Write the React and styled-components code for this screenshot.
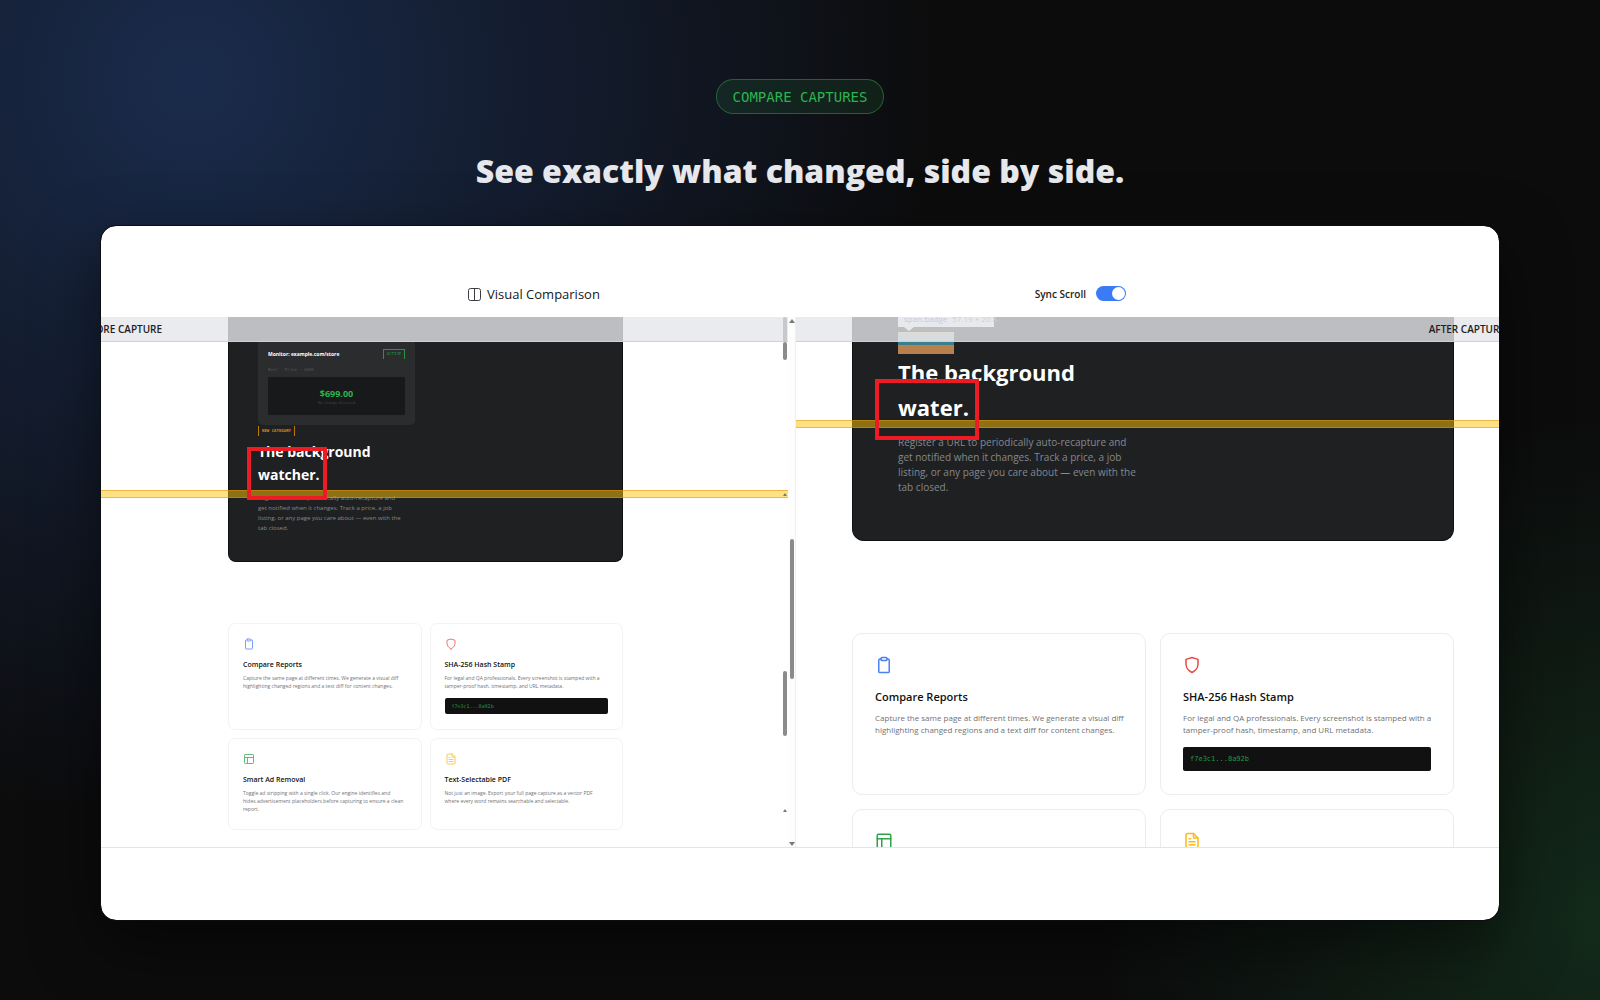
import React from "react";
import styled, { createGlobalStyle, css } from "styled-components";

const sans = `"Open Sans", "Noto Sans", sans-serif`;
const mono = `"DejaVu Sans Mono", "Liberation Mono", monospace`;

const GlobalStyle = createGlobalStyle`
  *, *::before, *::after { box-sizing: border-box; }
  html, body, #root { min-height: 100vh; }
  body { margin: 0; background: #0b0b0c; font-family: ${sans}; }
  h1, h2, h3, p, figure { margin: 0; }
`;

const Stage = styled.main`
  min-height: 100vh;
  display: flex;
  flex-direction: column;
  align-items: center;
  padding: 79px 100px 79px;
  overflow: hidden;
  background:
    radial-gradient(circle at 12% 8%, rgba(32, 56, 102, 0.7), transparent 44%),
    radial-gradient(circle at 100% 92%, rgba(24, 66, 36, 0.55), transparent 27%),
    #0c0c0d;
`;

const Pill = styled.span`
  display: flex;
  align-items: center;
  height: 35px;
  padding: 0 16px;
  border: 1px solid rgba(48, 176, 80, 0.45);
  border-radius: 18px;
  background: rgba(40, 150, 70, 0.14);
  color: #2db34e;
  font: 14px ${mono};
`;

const Title = styled.h1`
  margin: 33px 0 30px;
  color: #e6e8ec;
  font-size: 32px;
  font-weight: 800;
  line-height: 48px;
`;

const Frame = styled.section`
  width: 100%;
  flex: 1;
  display: flex;
  flex-direction: column;
  padding: 60px 0 72px;
  border: 1px solid #0c0d10;
  border-radius: 16px;
  background: #fff;
  background-clip: padding-box;
  box-shadow: 0 24px 64px rgba(0, 0, 0, 0.5);
  overflow: hidden;
`;

const Toolbar = styled.header`
  height: 31px;
  display: flex;
  align-items: flex-start;
  padding: 0 373px 0 367px;
  justify-content: space-between;
`;

const ToolTitle = styled.h2`
  display: flex;
  align-items: center;
  gap: 6px;
  height: 16px;
  color: #17181a;
  font-size: 13px;
  font-weight: 500;
`;

const SyncLabel = styled.label`
  display: flex;
  align-items: center;
  gap: 10px;
  height: 15px;
  color: #222;
  font-size: 10px;
  font-weight: 600;
`;

const Toggle = styled.input`
  appearance: none;
  width: 30px;
  height: 15px;
  margin: 0;
  padding: 1px;
  border-radius: 8px;
  background: #3b7cf6;
  display: flex;
  justify-content: flex-end;
  &::before {
    content: "";
    width: 13px;
    height: 13px;
    border-radius: 50%;
    background: #fff;
  }
`;

const Viewer = styled.div`
  flex: 1;
  min-height: 0;
  display: grid;
  grid-template-columns: 687fr 8px 703fr;
  border-bottom: 1px solid #e3e4e6;
`;

const Pane = styled.section`
  position: relative;
  min-width: 0;
  height: 530px;
  overflow: hidden;
`;

const LabelBar = styled.div`
  position: absolute;
  inset: 0 0 auto 0;
  height: 25px;
  display: flex;
  align-items: center;
  justify-content: ${(p) => (p.$end ? "flex-end" : "flex-start")};
  border-bottom: 1px solid #cfd1d4;
  background: rgba(228, 230, 234, 0.8);
  color: #1f2022;
  font-size: 10px;
  font-weight: 600;
  white-space: nowrap;
  span { margin: ${(p) => (p.$end ? "0 -6px 0 0" : "0 0 0 -23px")}; }
`;

const Band = styled.div`
  position: absolute;
  left: 0;
  right: 0;
  top: ${(p) => p.$top}px;
  height: 8px;
  border: solid rgba(224, 142, 20, 0.5);
  border-width: 1px 0;
  background: rgba(255, 193, 7, 0.5);
`;

const Marker = styled.div`
  position: absolute;
  border: 4px solid #ed1c24;
`;
const MarkerBefore = styled(Marker)`
  left: 146px;
  top: 130px;
  width: 80px;
  height: 53px;
`;
const MarkerAfter = styled(Marker)`
  left: 79px;
  top: 62px;
  width: 104px;
  height: 61px;
`;

const small = css`
  --pad: 127px;
  --hero-pad: 29px;
  --hero-radius: 8px;
  --h-size: 14px;
  --h-line: 23px;
  --h-gap: 7px;
  --p-size: 6px;
  --p-line: 10px;
  --p-width: 160px;
  --grid-gap: 8px;
  --card-pad: 14px;
  --card-radius: 7px;
  --card-line: #f3f3f5;
  --icon: 12px;
  --icon-fade: 0.75;
  --icon-gap: 9px;
  --t-size: 7px;
  --t-line: 12px;
  --c-gap: 3px;
  --c-size: 5px;
  --c-line: 8px;
  --code-gap: 8px;
  --code-height: 16px;
  --code-size: 5px;
`;
const large = css`
  --pad: 56px;
  --hero-pad: 45px;
  --hero-radius: 12px;
  --h-size: 22px;
  --h-line: 35px;
  --h-gap: 10px;
  --p-size: 10px;
  --p-line: 15px;
  --p-width: 240px;
  --grid-gap: 14px;
  --card-pad: 22px;
  --card-radius: 10px;
  --card-line: #ececee;
  --icon: 18px;
  --icon-fade: 1;
  --icon-gap: 14px;
  --t-size: 11px;
  --t-line: 18px;
  --c-gap: 6px;
  --c-size: 8px;
  --c-line: 12px;
  --code-gap: 11px;
  --code-height: 24px;
  --code-size: 7px;
`;

const Capture = styled.article`
  ${(p) => (p.$large ? large : small)}
  padding: 0 ${(p) => (p.$large ? 45 : 165)}px 0 var(--pad);
`;

const Hero = styled.section`
  height: ${(p) => p.$height}px;
  padding: ${(p) => p.$top}px var(--hero-pad) 0;
  border: 1px solid #0f1011;
  border-top: 0;
  border-radius: 0 0 var(--hero-radius) var(--hero-radius);
  background: #1f2022;
`;

const HeroTitle = styled.h2`
  color: #fff;
  font-size: var(--h-size);
  line-height: var(--h-line);
  font-weight: 700;
`;

const HeroText = styled.p`
  width: var(--p-width);
  margin-top: var(--h-gap);
  color: #85888d;
  font-size: var(--p-size);
  line-height: var(--p-line);
  white-space: nowrap;
`;

const Monitor = styled.div`
  width: 157px;
  height: 83px;
  padding: 6px 10px 10px;
  border-radius: 0 0 5px 5px;
  background: #2b2c2e;
`;
const MonitorHead = styled.div`
  display: flex;
  align-items: center;
  justify-content: space-between;
  height: 11px;
  color: #fff;
  font-size: 5px;
  font-weight: 700;
`;
const Active = styled.span`
  width: 22px;
  height: 10px;
  border: 1px solid #24963f;
  border-bottom: 0;
  color: #24963f;
  font: 4px/8px ${mono};
  text-align: center;
`;
const MonitorMeta = styled.div`
  margin: 6px 0 3px;
  color: #55575a;
  font: 4px/9px ${mono};
`;
const PriceBox = styled.div`
  height: 38px;
  display: flex;
  flex-direction: column;
  align-items: center;
  padding-top: 11px;
  background: #18191b;
  color: #2db34e;
  font-size: 9px;
  line-height: 12px;
  font-weight: 700;
  small { color: #44464a; font-size: 4px; line-height: 6px; font-weight: 400; }
`;
const Category = styled.span`
  display: block;
  width: 37px;
  height: 10px;
  margin: 1px 0 4px;
  border: solid #b97a0c;
  border-width: 0 1px;
  color: #d9900f;
  font: 700 4px/9px ${mono};
  text-align: center;
`;

const Inspector = styled.div`
  position: relative;
  width: 96px;
  height: 10px;
  padding-left: 6px;
  background: #f4f5f7;
  color: #6d7078;
  font-size: 8px;
  line-height: 4px;
  white-space: nowrap;
  b { color: #4c4cc8; font-weight: 400; margin-right: 5px; }
  &::after {
    content: "";
    position: absolute;
    left: 6px;
    top: 10px;
    border: solid transparent;
    border-width: 4px 5px 0;
    border-top-color: #f4f5f7;
  }
`;
const Inspected = styled.div`
  width: 56px;
  height: 22px;
  margin: 5px 0 1px;
  background: linear-gradient(#c9b860 0 1px, #a9b4bb 1px 10px, #3a7f8c 10px 13px, #9a8f55 13px 14px, #b9804e 14px);
`;

const Grid = styled.div`
  display: grid;
  grid-template-columns: 1fr 1fr;
  grid-auto-rows: auto;
  gap: var(--grid-gap);
  padding-top: ${(p) => p.$top}px;
`;
const Card = styled.section`
  min-width: 0;
  height: ${(p) => p.$height}px;
  padding: var(--card-pad);
  border: 1px solid var(--card-line);
  border-radius: var(--card-radius);
  svg { display: block; width: var(--icon); height: var(--icon); opacity: var(--icon-fade); }
`;
const CardTitle = styled.h3`
  margin-top: var(--icon-gap);
  color: #111;
  font-size: var(--t-size);
  line-height: var(--t-line);
  font-weight: 600;
`;
const CardText = styled.p`
  margin-top: var(--c-gap);
  color: #707276;
  font-size: var(--c-size);
  line-height: var(--c-line);
  white-space: nowrap;
`;
const Hash = styled.code`
  display: block;
  height: var(--code-height);
  margin-top: var(--code-gap);
  padding-left: 7px;
  border-radius: 2px;
  background: #111;
  color: #239a42;
  font: var(--code-size) / var(--code-height) ${mono};
`;

const Rail = styled.div`
  position: relative;
  background: #fdfdfd;
  border-right: 1px solid #efeff1;
`;
const Thumb = styled.i`
  position: absolute;
  ${(p) => (p.$inner ? "right: 1px" : "left: 2px")};
  top: ${(p) => p.$top}px;
  width: 4px;
  height: ${(p) => p.$height}px;
  border-radius: 2px;
  background: ${(p) => p.$color || "#8b8b8b"};
`;
const Arrow = styled.i`
  position: absolute;
  ${(p) => (p.$inner ? "right: 1px" : "left: 1px")};
  top: ${(p) => p.$top}px;
  border: solid transparent;
  border-width: ${(p) => (p.$down ? "4px 3px 0" : p.$inner ? "0 2px 3px" : "0 3px 4px")};
  border-${(p) => (p.$down ? "top" : "bottom")}-color: #77797c;
`;

const Svg = (p) => (
  <svg viewBox="0 0 24 24" fill="none" strokeWidth="2" strokeLinejoin="round" strokeLinecap="round" aria-hidden="true" {...p} />
);
const icons = {
  clipboard: (
    <Svg stroke="#4a80f0">
      <path d="M16 4h1.500a1.500 1.500 0 0 1 1.500 1.500v15a1.500 1.500 0 0 1-1.500 1.500h-11A1.500 1.500 0 0 1 5 20.500v-15A1.500 1.500 0 0 1 6.500 4H8" />
      <rect x="8" y="2" width="8" height="4" rx="1.500" />
    </Svg>
  ),
  shield: (
    <Svg stroke="#e9493f">
      <path d="M12 22s8-4 8-11V4.500l-8-2.500-8 2.500V11c0 7 8 11 8 11z" />
    </Svg>
  ),
  layout: (
    <Svg stroke="#2fa34c">
      <rect x="3" y="3" width="18" height="18" rx="1.500" />
      <path d="M3 9h18M9 9v12" />
    </Svg>
  ),
  file: (
    <Svg stroke="#f8bb1e">
      <path d="M14 2H6a2 2 0 0 0-2 2v16a2 2 0 0 0 2 2h12a2 2 0 0 0 2-2V8z" />
      <path d="M14 2v6h6M16 13H8M16 17H8M10 9H8" />
    </Svg>
  ),
};

const features = [
  { icon: "clipboard", title: "Compare Reports", lines: ["Capture the same page at different times. We generate a visual diff", "highlighting changed regions and a text diff for content changes."] },
  { icon: "shield", title: "SHA-256 Hash Stamp", lines: ["For legal and QA professionals. Every screenshot is stamped with a", "tamper-proof hash, timestamp, and URL metadata."], hash: "f7e3c1...8a92b" },
  { icon: "layout", title: "Smart Ad Removal", lines: ["Toggle ad stripping with a single click. Our engine identifies and", "hides advertisement placeholders before capturing to ensure a clean", "report."] },
  { icon: "file", title: "Text-Selectable PDF", lines: ["Not just an image. Export your full page capture as a vector PDF", "where every word remains searchable and selectable."] },
];

const Lines = ({ of }) => of.map((l, i) => <React.Fragment key={l}>{i > 0 && <br />}{l}</React.Fragment>);

const Features = ({ top, heights }) => (
  <Grid $top={top}>
    {features.map((f, i) => (
      <Card key={f.title} $height={heights[i >> 1]}>
        {icons[f.icon]}
        <CardTitle>{f.title}</CardTitle>
        <CardText><Lines of={f.lines} /></CardText>
        {f.hash && <Hash>{f.hash}</Hash>}
      </Card>
    ))}
  </Grid>
);

const HeroCopy = ({ word }) => (
  <>
    <HeroTitle>The background<br />{word}</HeroTitle>
    <HeroText>
      <Lines of={["Register a URL to periodically auto-recapture and", "get notified when it changes. Track a price, a job", "listing, or any page you care about — even with the", "tab closed."]} />
    </HeroText>
  </>
);

export default function App() {
  return (
    <>
      <GlobalStyle />
      <Stage>
        <Pill>COMPARE CAPTURES</Pill>
        <Title>See exactly what changed, side by side.</Title>
        <Frame>
          <Toolbar>
            <ToolTitle>
              <svg width="13" height="13" viewBox="0 0 13 13" fill="none" stroke="#3a3c40" aria-hidden="true">
                <rect x="0.500" y="0.500" width="12" height="12" rx="2" />
                <path d="M6.500 0.500v12" />
              </svg>
              Visual Comparison
            </ToolTitle>
            <SyncLabel>
              Sync Scroll
              <Toggle type="checkbox" role="switch" defaultChecked />
            </SyncLabel>
          </Toolbar>
          <Viewer>
            <Pane>
              <Capture>
                <Hero $height={245} $top={25}>
                  <Monitor>
                    <MonitorHead>Monitor: example.com/store<Active>ACTIVE</Active></MonitorHead>
                    <MonitorMeta>Best · Price · $699</MonitorMeta>
                    <PriceBox>$699.00<small>No change detected</small></PriceBox>
                  </Monitor>
                  <Category>NEW CATEGORY</Category>
                  <HeroCopy word="watcher." />
                </Hero>
                <Features top={61} heights={[107, 92]} />
              </Capture>
              <LabelBar><span>BEFORE CAPTURE</span></LabelBar>
              <Band $top={173} />
              <MarkerBefore />
              <Thumb $inner $top={0} $height={25} $color="#c6c8cb" />
              <Thumb $inner $top={25} $height={18} />
              <Arrow $inner $top={176} />
              <Thumb $inner $top={354} $height={65} />
              <Arrow $inner $top={492} />
            </Pane>
            <Rail>
              <Arrow $top={2} />
              <Thumb $top={222} $height={140} />
              <Arrow $down $top={525} />
            </Rail>
            <Pane>
              <Capture $large>
                <Hero $height={224} $top={0}>
                  <Inspector><b>span.badge</b>57.19 × 20.8</Inspector>
                  <Inspected />
                  <HeroCopy word="water." />
                </Hero>
                <Features top={92} heights={[162, 162]} />
              </Capture>
              <LabelBar $end><span>AFTER CAPTURE</span></LabelBar>
              <Band $top={103} />
              <MarkerAfter />
            </Pane>
          </Viewer>
        </Frame>
      </Stage>
    </>
  );
}
